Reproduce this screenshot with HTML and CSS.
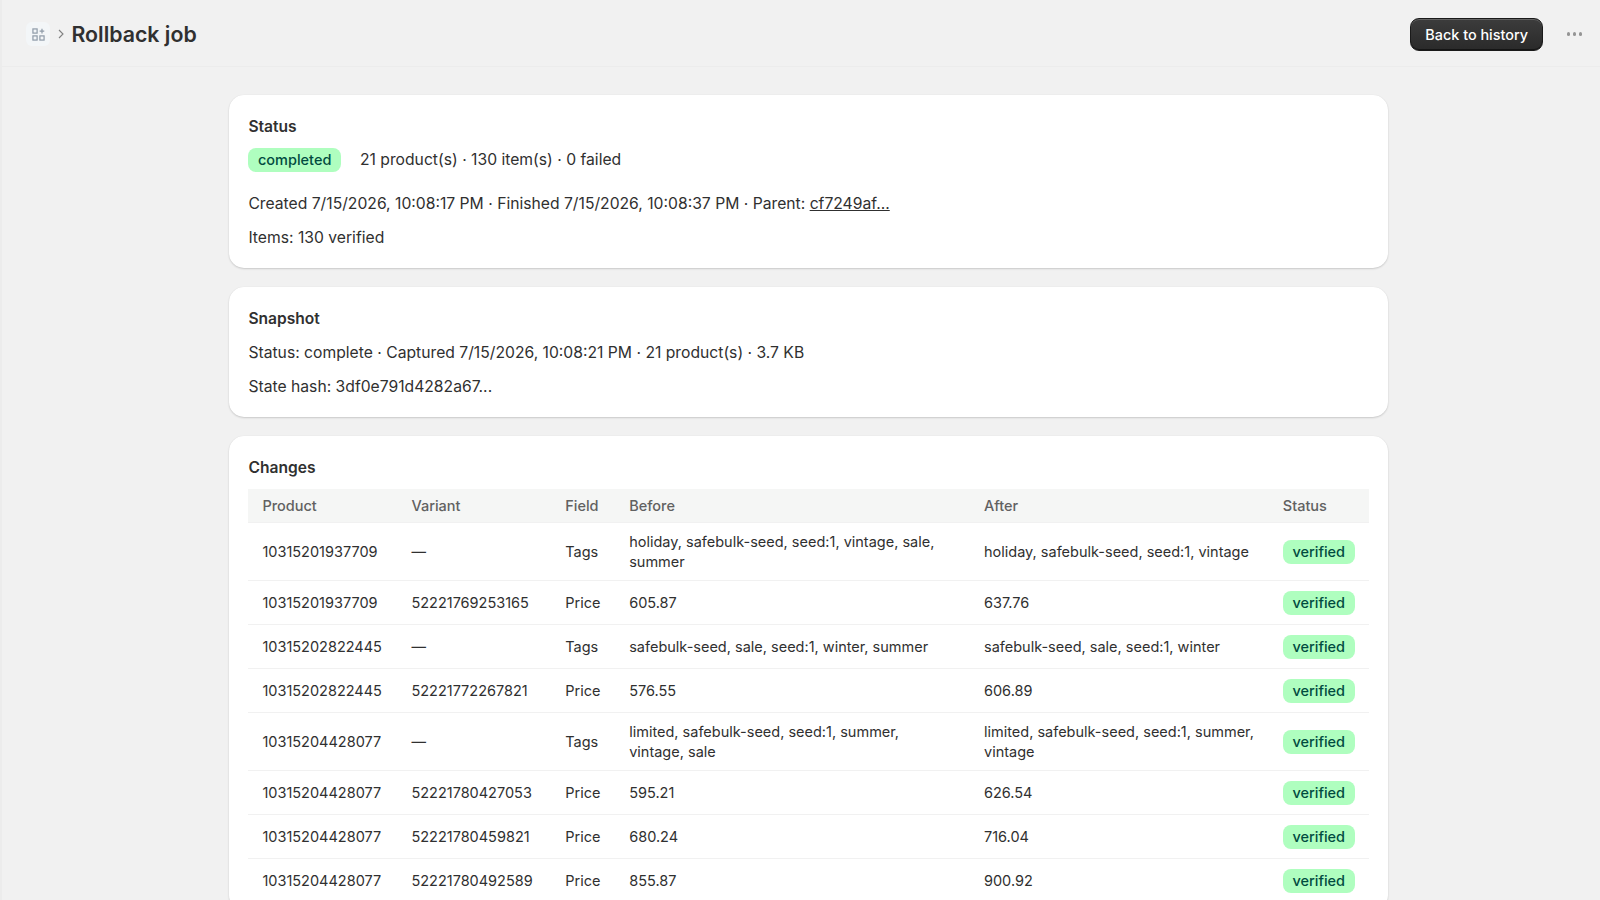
FILE: index.html
```html
<!DOCTYPE html>
<html lang="en">
<head>
    <meta charset="UTF-8">
    <meta name="viewport" content="width=device-width, initial-scale=1.0">
    <title>Rollback job</title>
    <link rel="stylesheet" href="styles.css">
</head>
<body>
    <header class="topbar">
        <div class="crumbs">
            <span class="app-icon">
                <svg width="13" height="13" viewBox="0 0 14 14" fill="none" stroke="#8f9ba8" stroke-width="1.3">
                    <rect x="1" y="1" width="4.5" height="4.5"/>
                    <rect x="1" y="8.5" width="4.5" height="4.5"/>
                    <rect x="8.5" y="8.5" width="4.5" height="4.5"/>
                    <path d="M10.75 0.8v5M8.2 3.3h5"/>
                </svg>
            </span>
            <svg class="chevron" width="8" height="10" viewBox="0 0 8 10" fill="none" stroke="#808080" stroke-width="1.1">
                <path d="M2 1l4 4-4 4"/>
            </svg>
            <h1>Rollback job</h1>
        </div>
        <div class="actions">
            <button class="back-button">Back to history</button>
            <span class="more"><i></i><i></i><i></i></span>
        </div>
    </header>

    <main class="page">
        <section class="card">
            <h2>Status</h2>
            <div class="status-row">
                <span class="badge">completed</span>
                <span>21 product(s) · 130 item(s) · 0 failed</span>
            </div>
            <p class="line">Created 7/15/2026, 10:08:17 PM · Finished 7/15/2026, 10:08:37 PM · Parent: <a href="#">cf7249af...</a></p>
            <p class="line">Items: 130 verified</p>
        </section>

        <section class="card">
            <h2>Snapshot</h2>
            <p class="line">Status: complete · Captured 7/15/2026, 10:08:21 PM · 21 product(s) · 3.7 KB</p>
            <p class="line">State hash: 3df0e791d4282a67...</p>
        </section>

        <section class="card">
            <h2 class="table-title">Changes</h2>
            <table class="changes">
                <colgroup>
                    <col class="c-product">
                    <col class="c-variant">
                    <col class="c-field">
                    <col class="c-before">
                    <col class="c-after">
                    <col class="c-status">
                </colgroup>
                <thead>
                    <tr><th>Product</th><th>Variant</th><th>Field</th><th>Before</th><th>After</th><th>Status</th></tr>
                </thead>
                <tbody>
                    <tr><td>10315201937709</td><td>—</td><td>Tags</td><td>holiday, safebulk-seed, seed:1, vintage, sale, summer</td><td>holiday, safebulk-seed, seed:1, vintage</td><td><span class="badge">verified</span></td></tr>
                    <tr><td>10315201937709</td><td>52221769253165</td><td>Price</td><td>605.87</td><td>637.76</td><td><span class="badge">verified</span></td></tr>
                    <tr><td>10315202822445</td><td>—</td><td>Tags</td><td>safebulk-seed, sale, seed:1, winter, summer</td><td>safebulk-seed, sale, seed:1, winter</td><td><span class="badge">verified</span></td></tr>
                    <tr><td>10315202822445</td><td>52221772267821</td><td>Price</td><td>576.55</td><td>606.89</td><td><span class="badge">verified</span></td></tr>
                    <tr><td>10315204428077</td><td>—</td><td>Tags</td><td>limited, safebulk-seed, seed:1, summer, vintage, sale</td><td>limited, safebulk-seed, seed:1, summer, vintage</td><td><span class="badge">verified</span></td></tr>
                    <tr><td>10315204428077</td><td>52221780427053</td><td>Price</td><td>595.21</td><td>626.54</td><td><span class="badge">verified</span></td></tr>
                    <tr><td>10315204428077</td><td>52221780459821</td><td>Price</td><td>680.24</td><td>716.04</td><td><span class="badge">verified</span></td></tr>
                    <tr><td>10315204428077</td><td>52221780492589</td><td>Price</td><td>855.87</td><td>900.92</td><td><span class="badge">verified</span></td></tr>
                </tbody>
            </table>
        </section>
    </main>
</body>
</html>
```

FILE: styles.css
```css
html {
    overflow: hidden;
}

body {
    margin: 0;
    height: 900px;
    overflow: hidden;
    border-left: 2px solid #ececec;
    background-color: #f1f1f1;
    color: #303030;
    font-family: Inter, "Liberation Sans", sans-serif;
    font-size: 15.7px;
    line-height: 20px;
}

.topbar {
    display: flex;
    justify-content: space-between;
    align-items: center;
    height: 64px;
    padding: 2px 18px 0 24px;
    border-bottom: 1px solid #ececec;
}

.crumbs {
    display: flex;
    align-items: center;
}

.app-icon {
    display: flex;
    justify-content: center;
    align-items: center;
    width: 24px;
    height: 24px;
    border-radius: 6px;
    background-color: #f3f6f8;
}

.chevron {
    margin: 0 6.5px 0 7px;
}

.crumbs h1 {
    margin: 0;
    font-size: 21.3px;
    font-weight: 600;
    line-height: 28px;
}

.actions {
    display: flex;
    align-items: center;
    gap: 23.5px;
}

.back-button {
    height: 33px;
    padding: 0 14px;
    border: 1px solid #1a1a1a;
    border-radius: 9px;
    background: linear-gradient(#3c3c3c, #2a2a2a);
    box-shadow: inset 0 1px 0 rgba(255, 255, 255, 0.2), inset 0 -1px 0 rgba(0, 0, 0, 0.5);
    color: #fff;
    font-family: inherit;
    font-size: 14.4px;
    font-weight: 550;
}

.more {
    display: flex;
    gap: 2.5px;
}

.more i {
    width: 3.5px;
    height: 3.5px;
    border-radius: 50%;
    background-color: #959595;
}

.page {
    display: flex;
    flex-direction: column;
    gap: 19px;
    width: 1159px;
    margin-left: 227px;
    padding-top: 28px;
}

.card {
    padding: 20px 19px 7px 19.4px;
    border-radius: 15px;
    background-color: #fff;
    box-shadow: 0 1px 2px rgba(0, 0, 0, 0.16), 0 0 1px rgba(0, 0, 0, 0.08);
}

.card h2 {
    margin: 0 0 12px;
    font-size: 15.6px;
    font-weight: 560;
    line-height: 23px;
}

.status-row {
    display: flex;
    align-items: center;
    gap: 19px;
    height: 24px;
    margin: -2px 0 21px;
}

.badge {
    display: inline-block;
    padding: 2px 9.6px;
    border-radius: 8px;
    background-color: #affebf;
    color: #014b40;
    font-size: 14.5px;
    font-weight: 500;
    line-height: 20px;
}

.line {
    margin: 0 0 12px;
    line-height: 22px;
}

.line a {
    color: #303030;
}

.card .table-title {
    margin-bottom: 10px;
}

.changes {
    width: 1121px;
    border-collapse: collapse;
    table-layout: fixed;
}

.c-product { width: 149px; }
.c-variant { width: 153.8px; }
.c-field { width: 64px; }
.c-before { width: 354.8px; }
.c-after { width: 298.8px; }
.c-status { width: 100.6px; }

.changes th {
    height: 33px;
    padding: 0 14px;
    background-color: #f5f6f5;
    color: #616161;
    font-size: 14.5px;
    font-weight: 500;
    text-align: left;
}

.changes td {
    height: 44px;
    padding: 9px 14px;
    border-top: 1px solid #f1f1f1;
    font-size: 14.5px;
    line-height: 19.5px;
    box-sizing: border-box;
}

.changes td:first-child {
    padding-right: 0;
}

.changes td:nth-child(5) {
    padding-right: 8px;
}
```
